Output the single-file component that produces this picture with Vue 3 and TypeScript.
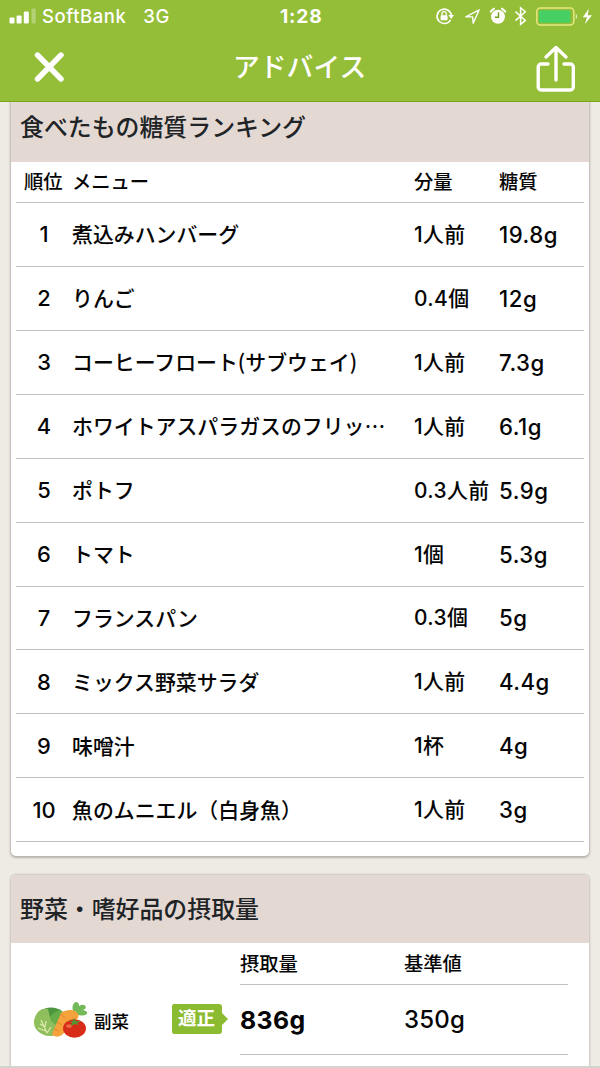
<script setup lang="ts">
interface FoodRow {
  rank: number
  menu: string
  amount: string
  carbs: string
}

const foods: FoodRow[] = [
  { rank: 1, menu: '煮込みハンバーグ', amount: '1人前', carbs: '19.8g' },
  { rank: 2, menu: 'りんご', amount: '0.4個', carbs: '12g' },
  { rank: 3, menu: 'コーヒーフロート(サブウェイ)', amount: '1人前', carbs: '7.3g' },
  { rank: 4, menu: 'ホワイトアスパラガスのフリッ…', amount: '1人前', carbs: '6.1g' },
  { rank: 5, menu: 'ポトフ', amount: '0.3人前', carbs: '5.9g' },
  { rank: 6, menu: 'トマト', amount: '1個', carbs: '5.3g' },
  { rank: 7, menu: 'フランスパン', amount: '0.3個', carbs: '5g' },
  { rank: 8, menu: 'ミックス野菜サラダ', amount: '1人前', carbs: '4.4g' },
  { rank: 9, menu: '味噌汁', amount: '1杯', carbs: '4g' },
  { rank: 10, menu: '魚のムニエル（白身魚）', amount: '1人前', carbs: '3g' },
]
</script>

<template>
  <div class="screen">
    <header class="top">
      <div class="status">
        <div class="status-left">
          <svg class="signal" width="27" height="16" viewBox="0 0 27 16">
            <rect x="0.5" y="9.5" width="5" height="6" rx="1" fill="#fff" />
            <rect x="7.6" y="7.5" width="5" height="8" rx="1" fill="#fff" />
            <rect x="14.8" y="3.5" width="5" height="12" rx="1" fill="#fff" />
            <rect x="22.5" y="0.5" width="4.3" height="15" rx="1" fill="#fff" opacity=".3" />
          </svg>
          <span class="carrier">SoftBank</span>
          <span class="network">3G</span>
        </div>
        <span class="clock">1:28</span>
        <svg class="status-icons" width="164" height="24" viewBox="432 4 164 24" fill="none">
          <g stroke="#fff" stroke-width="1.6">
            <path d="M450.6 19.8A7.2 7.2 0 1 1 451.4 15.2" />
          </g>
          <path d="M448.3 15h5.8l-2.9 4z" fill="#fff" />
          <rect x="440.6" y="15.2" width="7" height="5" rx=".8" fill="#fff" />
          <path d="M442 15.4v-1.6a2.1 2.1 0 0 1 4.2 0v1.6" stroke="#fff" stroke-width="1.3" />
          <path d="M465.8 16.8L479.2 9.8L473.2 23.2L472.6 16.9Z" stroke="#fff" stroke-width="1.4" stroke-linejoin="round" />
          <circle cx="498" cy="16.7" r="7" fill="#fff" />
          <path d="M490.7 11.6a10 10 0 0 1 3.4-3M505.3 11.6a10 10 0 0 0-3.4-3" stroke="#fff" stroke-width="2" stroke-linecap="round" />
          <path d="M498.5 12.3v4.9h-3.6" stroke="#75a01c" stroke-width="1.4" />
          <path d="M515.5 11.6L525.3 20.4L520.6 24.4V7.8L525.3 11.8L515.5 20.6" stroke="#fff" stroke-width="1.5" />
          <rect x="536.8" y="8" width="37" height="17" rx="3.5" stroke="#e5e77e" stroke-width="1.5" />
          <rect x="539" y="10.2" width="31.4" height="12.6" rx="1.6" fill="#46cf63" />
          <path d="M575.8 13.5q2.4 2.8 0 6z" fill="#f3f7d3" />
          <path d="M588.8 8.8L582.8 17.3H587L584.8 24.3L592 15.3H587.7Z" fill="#fff" />
        </svg>
      </div>
      <nav class="nav">
        <svg width="30" height="30" viewBox="0 0 30 30">
          <path d="M3.5 3L27 27M27 3L3.5 27" stroke="#fff" stroke-width="5.4" stroke-linecap="round" />
        </svg>
        <h1>アドバイス</h1>
        <svg class="share" width="40" height="48" viewBox="0 0 40 48" fill="none" stroke="#fff" stroke-width="3.4" stroke-linecap="round" stroke-linejoin="round">
          <path d="M12 19H5.2a3 3 0 0 0-3 3V42a3 3 0 0 0 3 3H34.3a3 3 0 0 0 3-3V22a3 3 0 0 0-3-3H28M20 35V3M10 12L20 2.5L30 12" />
        </svg>
      </nav>
    </header>

    <main class="content">
      <section class="card ranking">
        <h2>食べたもの糖質ランキング</h2>
        <div class="table">
          <div class="row head">
            <span>順位</span><span>メニュー</span><span>分量</span><span>糖質</span>
          </div>
          <div v-for="food in foods" :key="food.rank" class="row">
            <span class="rank">{{ food.rank }}</span>
            <span class="menu">{{ food.menu }}</span>
            <span class="amount">{{ food.amount }}</span>
            <span class="carbs">{{ food.carbs }}</span>
          </div>
        </div>
      </section>

      <section class="card intake">
        <h2>野菜・嗜好品の摂取量</h2>
        <div class="intake-body">
          <div class="category">
            <svg width="56" height="38" viewBox="0 0 56 38">
              <path d="M41 13C38 6 40 2 43 1Q46 1 46 5Q51 2 53 6Q53 8 50 9Q55 10 54 13Q49 16 43 13Z" fill="#73b957" />
              <ellipse cx="18" cy="19" rx="15.5" ry="12.5" fill="#4b963e" />
              <path d="M15 20Q18 11 28 9Q35 17 25 27Z" fill="#66ac49" />
              <path d="M5 11Q9 7 15 8L18 20L24 25L20 35Q9 36 3 28Q-2 20 5 11Z" fill="#8fbe5c" />
              <path d="M8 19L14 32M7 23L12 26M5 27L13 30M13 20L12 26M18 26L14 32" stroke="#dce9ac" stroke-width="1.3" fill="none" />
              <path d="M28 12C36 6 48 10 45 17L29 34Q22 38 19 33Z" fill="#f5a13c" />
              <path d="M28 14L33 17M24 21L29 24M21 28L26 30" stroke="#e08b2c" stroke-width="1" />
              <ellipse cx="41.5" cy="27.5" rx="11.5" ry="9.2" fill="#d72d18" />
              <ellipse cx="36" cy="25" rx="3" ry="1.8" fill="#ed6942" />
              <path d="M41 17L43 20L48 20L44 22L46 24L42 23L38 25L39 21L35 20L40 20Z" fill="#579334" />
            </svg>
            <span>副菜</span>
          </div>
          <div class="badge">
            <svg width="58" height="32" viewBox="0 0 58 32">
              <path d="M3 1H48Q51 1 51 4V10L57 16L51 22V28Q51 31 48 31H3Q1 31 1 28V4Q1 1 3 1Z" fill="#8bbb30" />
            </svg>
            <span>適正</span>
          </div>
          <div class="values">
            <div class="value-row labels"><span>摂取量</span><span>基準値</span></div>
            <div class="value-row amounts"><strong>836g</strong><span>350g</span></div>
          </div>
        </div>
      </section>
    </main>
  </div>
</template>

<style>
body {
  margin: 0;
}
</style>

<style scoped>
.screen {
  width: 600px;
  height: 1068px;
  overflow: hidden;
  box-sizing: border-box;
  background: #eeebe3;
  border-bottom: 2px solid #d4d3d0;
  font-family: Inter, "Noto Sans CJK JP", sans-serif;
  font-weight: 500;
  color: #050505;
  white-space: nowrap;
}
.top {
  height: 102px;
  background: #94bd38;
  border-bottom: 1px solid #7da51c;
  box-sizing: border-box;
  color: #fff;
}
.status {
  height: 32px;
  display: grid;
  grid-template-columns: 280px 152px 164px;
  align-items: center;
}
.status-left {
  display: flex;
  align-items: center;
  padding-left: 9px;
  font-size: 18.5px;
}
.carrier {
  margin-left: 6px;
  letter-spacing: 0.55px;
}
.network {
  margin-left: 17px;
  letter-spacing: 0.6px;
}
.clock {
  font-size: 19.2px;
  font-weight: 700;
  letter-spacing: 0.8px;
}
.nav {
  height: 69px;
  display: grid;
  grid-template-columns: 200px 336px 40px;
  align-items: center;
}
.nav > svg:first-child {
  margin-left: 34px;
}
h1 {
  margin: 0;
  padding: 1px 0 0 33px;
  font-size: 26.8px;
  font-weight: 500;
  line-height: 40px;
}
.share {
  margin-top: 5px;
}
.content {
  padding: 0 11px;
}
.card {
  background: #fff;
  box-shadow: 0 1px 2px 1px #b8b5b0;
  overflow: hidden;
  clip-path: inset(0 -4px -4px -4px);
}
h2 {
  margin: 0;
  padding-left: 9px;
  background: #e4d8d3;
  color: #202426;
  font-weight: 500;
  font-size: 23.9px;
}
.ranking {
  height: 754px;
  border-radius: 0 0 5px 5px;
}
.ranking h2 {
  height: 60px;
  line-height: 52px;
}
.table {
  padding: 0 5px;
}
.row {
  height: 63.93px;
  box-sizing: border-box;
  display: grid;
  grid-template-columns: 56px 342px 85px 85px;
  align-items: center;
  border-bottom: 1px solid #bfbfc1;
  font-size: 20.9px;
}
.row.head {
  height: 41px;
  padding-bottom: 2px;
  font-size: 19.3px;
}
.row.head span:first-child {
  padding-left: 8px;
}
.rank {
  text-align: center;
  font-size: 21.9px;
}
.menu {
  font-family: "Noto Sans CJK JP", sans-serif;
  padding-bottom: 2px;
}
.amount {
  padding-bottom: 3px;
  letter-spacing: 0.4px;
}
.carbs {
  font-size: 22.2px;
  letter-spacing: 0.5px;
}
.intake {
  margin-top: 19px;
  height: 210px;
  border-radius: 5px 5px 0 0;
  box-shadow: 0 0 2px 1px #c6c3bd;
  clip-path: none;
}
.intake h2 {
  height: 68px;
  line-height: 69px;
}
.intake-body {
  display: grid;
  grid-template-columns: 160px 69px 328px;
}
.category {
  display: flex;
  align-items: center;
  margin-top: 42px;
  height: 70px;
  padding-left: 22px;
  gap: 5px;
  font-size: 17.5px;
}
.badge {
  display: grid;
  margin-top: 60px;
  height: 32px;
  color: #fff;
  font-size: 18.5px;
  font-weight: 700;
  line-height: 31px;
}
.badge > * {
  grid-area: 1 / 1;
}
.badge span {
  padding-left: 7px;
}
.value-row {
  display: grid;
  grid-template-columns: 164px 164px;
  align-items: center;
  box-sizing: border-box;
  border-bottom: 1px solid #bfbfc1;
}
.labels {
  height: 41.5px;
  font-size: 19.3px;
}
.amounts {
  height: 70.5px;
  padding-top: 1px;
  font-size: 24px;
  letter-spacing: 0.2px;
}
strong {
  font-weight: 700;
  font-size: 24.8px;
  letter-spacing: 0.4px;
}
</style>
